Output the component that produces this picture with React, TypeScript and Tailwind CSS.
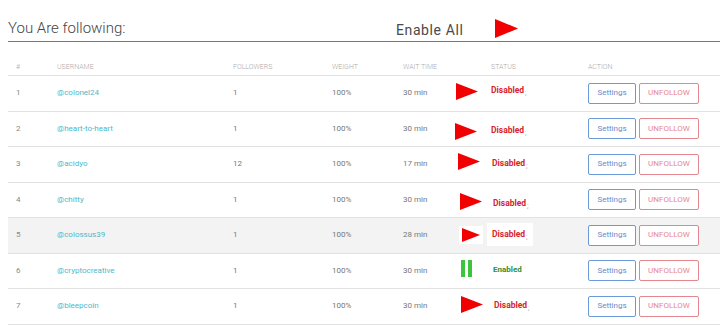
import React from 'react';

type Row = {
  id: number;
  user: string;
  followers: string;
  wait: string;
  enabled: boolean;
  iconCls: string;
  textCls: string;
  shaded?: boolean;
};

const rows: Row[] = [
  { id: 1, user: '@colonel24', followers: '1', wait: '30 min', enabled: false, iconCls: 'ml-[1px] -mt-[3px]', textCls: 'ml-0 -mt-[6px]' },
  { id: 2, user: '@heart-to-heart', followers: '1', wait: '30 min', enabled: false, iconCls: 'ml-0 mt-[5px]', textCls: 'ml-0 mt-[3px]' },
  { id: 3, user: '@acidyo', followers: '12', wait: '17 min', enabled: false, iconCls: 'ml-[3px] -mt-[5px]', textCls: 'ml-[1px] -mt-[2px]' },
  { id: 4, user: '@chitty', followers: '1', wait: '30 min', enabled: false, iconCls: 'ml-[5px] mt-[4px]', textCls: 'ml-[2px] mt-[8px]' },
  { id: 5, user: '@colossus39', followers: '1', wait: '28 min', enabled: false, iconCls: 'ml-[4px] mt-0', textCls: 'ml-[-4px] -mt-[2px]', shaded: true },
  { id: 6, user: '@cryptocreative', followers: '1', wait: '30 min', enabled: true, iconCls: 'ml-[6px] -mt-[4px]', textCls: 'ml-[2px] -mt-[2px]' },
  { id: 7, user: '@bleepcoin', followers: '1', wait: '30 min', enabled: false, iconCls: 'ml-[6px] -mt-[3px]', textCls: 'ml-[3px] -mt-[2px]' },
  { id: 8, user: '', followers: '', wait: '', enabled: false, iconCls: '', textCls: '' },
];

function PlayIcon({ w = 23, h = 18 }: { w?: number; h?: number }) {
  return (
    <svg width={w} height={h} viewBox={`0 0 ${w} ${h}`} className="block">
      <polygon points={`0,0 ${w},${h / 2} 0,${h}`} fill="#f00000" />
    </svg>
  );
}

function PauseIcon() {
  return (
    <div className="flex gap-[3px]">
      <div className="w-[4px] h-[17px] bg-[#3cc43c]" />
      <div className="w-[4px] h-[17px] bg-[#3cc43c]" />
    </div>
  );
}

export default function App() {
  return (
    <div className="w-[720px] h-[331px] overflow-hidden bg-white font-['Roboto',sans-serif]">
      <div className="ml-2 flex items-end h-[42px] border-b border-[#777]">
        <div className="w-[388px] pb-[5px] text-[15px] leading-[15px] font-light text-[#444]">
          You Are following:
        </div>
        <div className="pb-[3px] text-[14px] leading-[15px] tracking-[0.6px] text-[#4a4a4a]">Enable All</div>
        <div className="ml-[32px] pb-[3px]">
          <PlayIcon w={23} h={19} />
        </div>
      </div>

      <div className="ml-2 pl-2 flex items-end h-[34px] pb-[4px] border-b border-[#e2e2e2] text-[7px] leading-[8px] text-[#aaa] uppercase font-light">
        <div className="w-[41px]">#</div>
        <div className="w-[176px]">Username</div>
        <div className="w-[99px]">Followers</div>
        <div className="w-[71px]">Weight</div>
        <div className="w-[52px]">Wait Time</div>
        <div className="w-[36px]" />
        <div className="w-[97px]">Status</div>
        <div>Action</div>
      </div>

      {rows.map((r) => (
        <div
          key={r.id}
          className={`ml-2 pl-2 flex items-center h-[35.5px] border-b border-[#e2e2e2] text-[8px] text-[#777] ${
            r.shaded ? 'bg-[#f3f3f3]' : 'bg-white'
          }`}
        >
          <div className="w-[41px] text-[#888]">{r.user ? r.id : ''}</div>
          <div className="w-[176px] text-[#4bbacb]">{r.user}</div>
          <div className="w-[99px]">{r.followers}</div>
          <div className="w-[71px]">{r.user ? '100%' : ''}</div>
          <div className="w-[52px]">{r.wait}</div>
          <div className="w-[36px]">
            {r.user && (
              <div className={`w-fit ${r.iconCls} ${r.shaded ? 'bg-white px-[3px] py-[2px]' : ''}`}>
                {r.enabled ? <PauseIcon /> : r.shaded ? <PlayIcon w={18} h={14} /> : <PlayIcon w={22} h={17} />}
              </div>
            )}
          </div>
          <div className="w-[97px]">
            {r.user && (
              <div className={`w-fit ${r.textCls} ${r.shaded ? 'bg-white px-[5px] py-[5px]' : ''}`}>
                {r.enabled ? (
                  <span className="font-bold text-[#2f8f2f]">Enabled</span>
                ) : (
                  <span className="font-bold text-[8.5px] text-[#d8232e]">
                    Disabled<span className="font-normal text-[7px] text-[#9aa8bb] ml-[1px] relative top-[2px]">;</span>
                  </span>
                )}
              </div>
            )}
          </div>
          {r.user ? (
            <div className="flex gap-[3px]">
              <button className="w-[48px] h-[21px] border border-[#6b9ad8] rounded-[2px] text-[8px] text-[#6a8ccc] bg-white">
                Settings
              </button>
              <button className="w-[60px] h-[21px] border border-[#e3868d] rounded-[2px] text-[8px] text-[#e8868c] bg-white uppercase">
                Unfollow
              </button>
            </div>
          ) : (
            <div className="flex gap-[3px] self-start mt-[6px]">
              <div className="w-[48px] h-[21px] border border-[#6b9ad8] rounded-[2px] bg-white" />
              <div className="w-[60px] h-[21px] border border-[#e3868d] rounded-[2px] bg-white" />
            </div>
          )}
        </div>
      ))}
    </div>
  );
}
